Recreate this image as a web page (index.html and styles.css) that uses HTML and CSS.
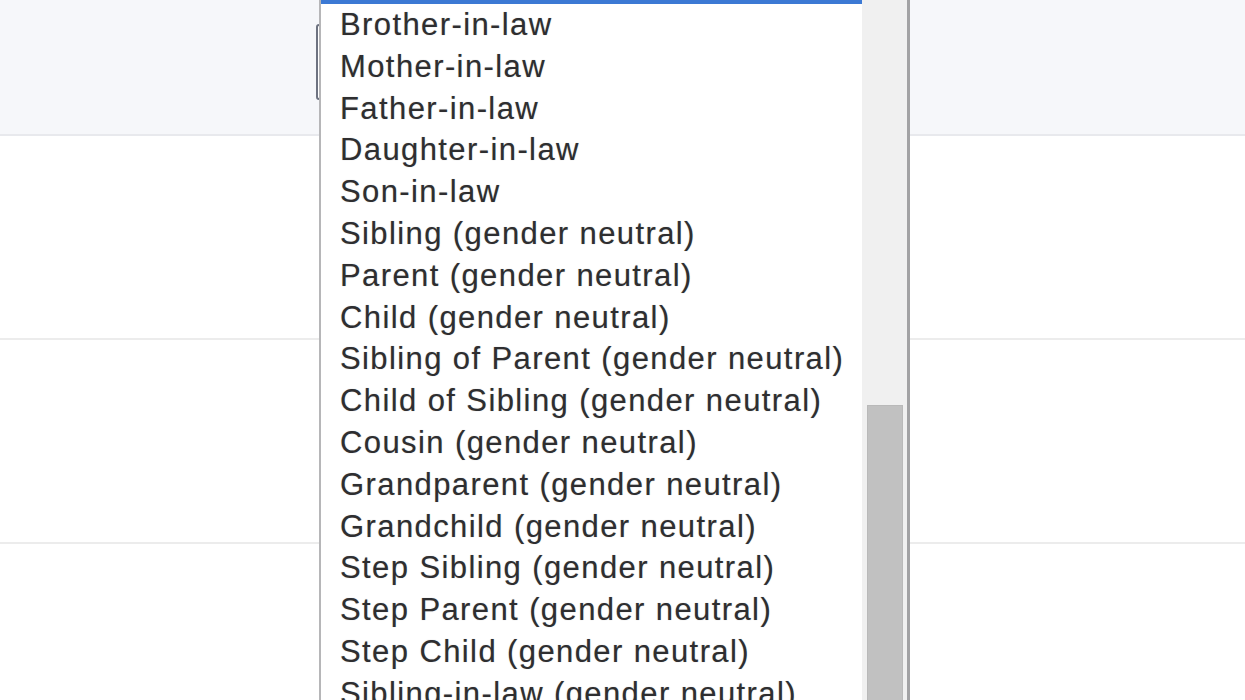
FILE: index.html
```html
<!DOCTYPE html>
<html lang="en">
<head>
<meta charset="utf-8">
<title>Relationship dropdown</title>
<link rel="stylesheet" href="styles.css">
</head>
<body>
<div class="page">
  <div class="band">
    <div class="select-box"></div>
  </div>
  <div class="row"></div>
  <div class="row"></div>
  <div class="row last"></div>

  <div class="dropdown">
    <div class="list">
      <div class="selected-edge"></div>
      <div class="options">
        <div class="opt">Brother-in-law</div>
        <div class="opt">Mother-in-law</div>
        <div class="opt">Father-in-law</div>
        <div class="opt">Daughter-in-law</div>
        <div class="opt">Son-in-law</div>
        <div class="opt">Sibling (gender neutral)</div>
        <div class="opt">Parent (gender neutral)</div>
        <div class="opt">Child (gender neutral)</div>
        <div class="opt">Sibling of Parent (gender neutral)</div>
        <div class="opt">Child of Sibling (gender neutral)</div>
        <div class="opt">Cousin (gender neutral)</div>
        <div class="opt">Grandparent (gender neutral)</div>
        <div class="opt">Grandchild (gender neutral)</div>
        <div class="opt">Step Sibling (gender neutral)</div>
        <div class="opt">Step Parent (gender neutral)</div>
        <div class="opt">Step Child (gender neutral)</div>
        <div class="opt">Sibling-in-law (gender neutral)</div>
      </div>
    </div>
    <div class="scrollbar">
      <div class="thumb"></div>
    </div>
  </div>
</div>
</body>
</html>
```

FILE: styles.css
```css
html, body {
  margin: 0;
  padding: 0;
  height: 100%;
  overflow: hidden;
  background: #ffffff;
  font-family: "Liberation Sans", Arial, sans-serif;
}

.page {
  position: relative;
  width: 1245px;
  height: 700px;
  overflow: hidden;
}

.band {
  height: 136px;
  background: #f6f7fa;
  border-bottom: 2px solid #e8e9ed;
  padding-top: 24px;
  box-sizing: border-box;
}

.select-box {
  margin-left: 316px;
  width: 500px;
  height: 76px;
  border: 2px solid #6d7280;
  border-radius: 3px;
  box-sizing: border-box;
  background: #ffffff;
}

.row {
  height: 204px;
  border-bottom: 2px solid #ececec;
  box-sizing: border-box;
}

.row.last {
  border-bottom: none;
}

.dropdown {
  position: absolute;
  left: 319px;
  top: 0;
  width: 591px;
  height: 720px;
  display: flex;
  background: #ffffff;
  border-left: 2px solid #b6b6b8;
  border-right: 3px solid #a2a2a4;
  box-sizing: border-box;
}

.list {
  flex: 1;
  overflow: hidden;
  background: #ffffff;
}

.selected-edge {
  height: 4px;
  background: #3c79d4;
}

.opt {
  height: 41.8px;
  line-height: 41.8px;
  padding-left: 19px;
  font-size: 31px;
  letter-spacing: 1.4px;
  color: #2e2e30;
  white-space: nowrap;
  text-shadow: 0 0 1px rgba(40, 40, 44, 0.35);
}

.scrollbar {
  width: 45px;
  background: #f0f0f0;
  padding-top: 405px;
  padding-left: 5px;
  box-sizing: border-box;
}

.thumb {
  width: 36px;
  height: 320px;
  background: #c1c1c1;
  border: 1px solid #b9b9b9;
  box-sizing: border-box;
}
```
